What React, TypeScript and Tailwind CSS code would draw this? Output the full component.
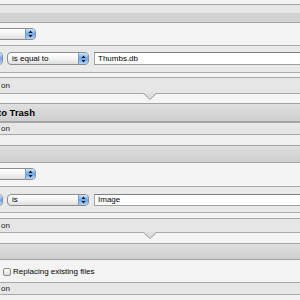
import React from "react";

const font = { fontFamily: '"Liberation Sans", Arial, sans-serif' };

function Arrows() {
  return (
    <svg width="5" height="8" viewBox="0 0 5 8">
      <path d="M2.5 0.5 L4.5 3 L0.5 3 Z" fill="#1a1a1a" />
      <path d="M0.5 5 L4.5 5 L2.5 7.5 Z" fill="#1a1a1a" />
    </svg>
  );
}

interface PopupProps {
  label?: string;
  className?: string;
}

function Popup({ label, className }: PopupProps) {
  return (
    <div
      className={
        "flex h-full shrink-0 items-center overflow-hidden rounded-[4px] border border-[#8d8d8d] bg-gradient-to-b from-white via-[#f4f4f4] to-[#dedede] " +
        (className ?? "")
      }
    >
      <span className="pl-[4px] text-[8px] leading-none text-black">{label}</span>
      <div className="ml-auto flex h-full w-[10px] items-center justify-center border-l border-[#7d9cc4] bg-gradient-to-b from-[#cfe4fb] via-[#6aa6ee] to-[#b0d4f9]">
        <Arrows />
      </div>
    </div>
  );
}

function TextField({ value }: { value: string }) {
  return (
    <div className="mr-[-4px] flex h-full flex-1 items-center border border-[#a0a0a0] border-t-[#808080] bg-white">
      <span className="pl-[3px] text-[8px] leading-none text-black">{value}</span>
    </div>
  );
}

function Footer({ h, notch }: { h: string; notch?: boolean }) {
  return (
    <div className={"relative flex items-center border-y border-[#a8a8a8] bg-[#e6e6e6] " + h}>
      <span className="pl-[1px] text-[8px] leading-none text-[#222]">on</span>
      {notch && (
        <svg
          className="absolute left-[142px] top-full"
          width="16"
          height="8"
          viewBox="0 0 16 8"
        >
          <path d="M0 -1 L8 6.5 L16 -1 Z" fill="#dedede" stroke="#9a9a9a" strokeWidth="1" />
        </svg>
      )}
    </div>
  );
}

function TitleBar({ h, children }: { h: string; children?: React.ReactNode }) {
  return (
    <div
      className={
        "flex items-center overflow-hidden border-y border-[#a4a4a4] bg-gradient-to-b from-[#e0e0e0] to-[#cecece] " + h
      }
    >
      {children}
    </div>
  );
}

export default function App() {
  return (
    <div className="h-[300px] w-[300px] overflow-hidden bg-[#f4f4f4]" style={font}>
      {/* tail of the workflow above */}
      <div className="h-[5px] border-b border-[#a0a0a0] bg-[#f2f2f2]" />

      {/* Filter Finder Items */}
      <div className="h-[8px] bg-[#e7e7e7]" />
      <div className="h-[10px] border-b border-[#a6a6a6] bg-[#d3d3d3]" />
      <div className="h-[22px] bg-[#f4f4f4] pt-[5px]">
        <div className="h-[12px]">
          <Popup className="ml-[-34px] w-[70px]" />
        </div>
      </div>
      <div className="h-[28px] border-y border-[#acacac] bg-[#e9e9e9] pt-[6px]">
        <div className="flex h-[13px] items-center gap-[4px]">
          <Popup className="ml-[-57px] w-[60px]" />
          <Popup label="is equal to" className="w-[82px]" />
          <div className="ml-[1px] flex h-full flex-1">
            <TextField value="Thumbs.db" />
          </div>
        </div>
      </div>
      <div className="h-[4px] bg-[#f4f4f4]" />
      <Footer h="h-[17px]" notch />
      <div className="h-[9px] bg-[#f5f5f5]" />

      {/* Move Finder Items to Trash */}
      <TitleBar h="h-[19px]">
        <span className="ml-[-2px] whitespace-nowrap text-[9.5px] font-bold leading-none text-black">
          to Trash
        </span>
      </TitleBar>
      <Footer h="h-[13px]" />
      <div className="h-[10px] bg-[#f0f0f0]" />

      {/* Filter Finder Items */}
      <TitleBar h="h-[18px]" />
      <div className="h-[23px] bg-[#f4f4f4] pt-[5px]">
        <div className="h-[12px]">
          <Popup className="ml-[-34px] w-[70px]" />
        </div>
      </div>
      <div className="h-[27px] border-y border-[#acacac] bg-[#e9e9e9] pt-[7px]">
        <div className="flex h-[12px] items-center gap-[4px]">
          <Popup className="ml-[-57px] w-[60px]" />
          <Popup label="is" className="w-[82px]" />
          <div className="ml-[1px] flex h-full flex-1">
            <TextField value="Image" />
          </div>
        </div>
      </div>
      <div className="h-[5px] bg-[#f4f4f4]" />
      <Footer h="h-[15px]" notch />
      <div className="h-[10px] bg-[#f4f4f4]" />

      {/* Copy Finder Items */}
      <TitleBar h="h-[17px]" />
      <div className="flex h-[22px] items-center bg-[#f4f4f4] pl-[3px] pt-[1px]">
        <div className="h-[8px] w-[8px] rounded-[2px] border border-[#8a8a8a] bg-gradient-to-b from-white to-[#dcdcdc]" />
        <span className="ml-[2px] text-[8px] leading-none text-black">Replacing existing files</span>
      </div>
      <Footer h="h-[13px]" />
      <div className="h-[8px] bg-[#f2f2f2]" />
    </div>
  );
}
